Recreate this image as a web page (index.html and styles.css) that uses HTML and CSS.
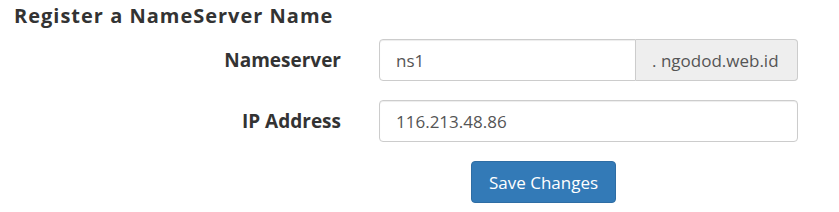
FILE: index.html
```html
<!DOCTYPE html>
<html>
<head>
  <link rel="stylesheet" href="styles.css">
</head>
<body>
  <div class="panel">
    <h3 class="title">Register a NameServer Name</h3>

    <form class="ns-form">
      <label class="field-label" for="ns">Nameserver</label>
      <div class="input-group">
        <input type="text" id="ns" class="form-control" value="ns1">
        <span class="addon">. ngodod.web.id</span>
      </div>

      <label class="field-label" for="ip">IP Address</label>
      <input type="text" id="ip" class="form-control" value="116.213.48.86">

      <div></div>
      <div class="actions">
        <button type="button" class="btn-primary">Save Changes</button>
      </div>
    </form>
  </div>
</body>
</html>
```

FILE: styles.css
```css
* {
  box-sizing: border-box;
}

body {
  margin: 0;
  background: #fff;
  font-family: "Open Sans", sans-serif;
  color: #333;
}

.panel {
  padding: 3px 41px 0 14px;
}

.title {
  margin: 0 0 11px;
  font-family: "Open Sans", sans-serif;
  font-size: 20px;
  font-weight: 700;
  letter-spacing: 1px;
  line-height: 25px;
  color: #333;
}

.ns-form {
  display: grid;
  grid-template-columns: 327px 1fr;
  column-gap: 38px;
  row-gap: 19px;
  align-items: center;
}

.field-label {
  text-align: right;
  font-size: 19px;
  font-weight: 700;
  color: #333;
}

.input-group {
  display: flex;
}

.form-control {
  width: 100%;
  height: 42px;
  padding: 0 16px;
  border: 1px solid #ccc;
  border-radius: 4px;
  font-family: "Open Sans", sans-serif;
  font-size: 17px;
  color: #555;
  background: #fff;
  box-shadow: inset 0 1px 1px rgba(0, 0, 0, 0.075);
  outline: none;
}

.input-group .form-control {
  flex: 1;
  border-radius: 4px 0 0 4px;
}

.addon {
  display: flex;
  align-items: center;
  width: 162px;
  padding: 0 12px 0 16px;
  border: 1px solid #ccc;
  border-left: none;
  border-radius: 0 4px 4px 0;
  background: #eee;
  font-size: 17px;
  color: #555;
  white-space: nowrap;
}

.actions {
  display: flex;
  padding-left: 92px;
}

.btn-primary {
  height: 42px;
  padding: 0 17px;
  background: #337ab7;
  border: 1px solid #2e6da4;
  border-radius: 4px;
  color: #fff;
  font-family: "Open Sans", sans-serif;
  font-size: 17px;
  cursor: pointer;
}
```
